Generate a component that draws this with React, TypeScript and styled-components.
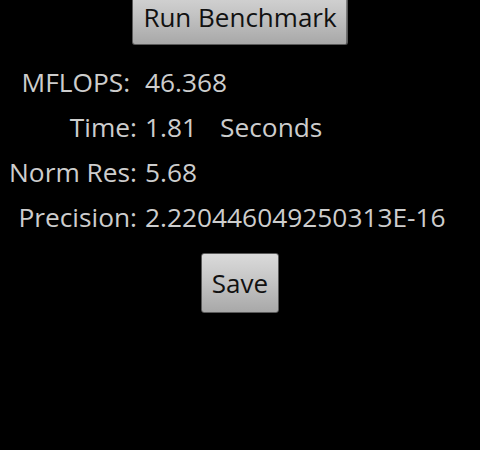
import React from "react";
import styled, { createGlobalStyle } from "styled-components";

const Global = createGlobalStyle`
  html, body {
    margin: 0;
    padding: 0;
    background: #000;
    overflow: hidden;
  }
  body {
    font-family: "Open Sans", "DejaVu Sans", sans-serif;
  }
`;

const Screen = styled.div`
  width: 480px;
  height: 450px;
  background: #000;
  display: flex;
  flex-direction: column;
  align-items: center;
  overflow: hidden;
`;

const Button = styled.button<{ $clipped?: boolean }>`
  height: ${(p) => (p.$clipped ? 45 : 60)}px;
  padding: ${(p) => (p.$clipped ? "4px 10px 0" : "0 10px")};
  border: 1px solid #5a5a5a;
  border-top: ${(p) => (p.$clipped ? "none" : "1px solid #5a5a5a")};
  border-radius: ${(p) => (p.$clipped ? "0 0 3px 3px" : "3px")};
  background: linear-gradient(to bottom, #dcdcdc 0%, #c4c4c4 50%, #a8a8a8 100%);
  background-size: 100% 60px;
  background-position: bottom;
  background-repeat: no-repeat;
  color: #111;
  font-family: "Open Sans", "DejaVu Sans", sans-serif;
  font-size: 26px;
  line-height: 1;
  box-sizing: border-box;
  display: flex;
  align-items: ${(p) => (p.$clipped ? "flex-start" : "center")};
  justify-content: center;
`;

const Table = styled.div`
  align-self: stretch;
  display: grid;
  grid-template-columns: 137px 1fr;
  column-gap: 8px;
  margin-top: 15px;
  margin-bottom: 13px;
`;

const Label = styled.span`
  text-align: right;
  white-space: pre;
  color: #cdcdcd;
  font-size: 26.3px;
  line-height: 45px;
`;

const Value = styled.span`
  white-space: pre;
  color: #cdcdcd;
  font-size: 26.3px;
  line-height: 45px;
  display: flex;
  gap: 23px;
`;

export default function App() {
  return (
    <>
      <Global />
      <Screen>
        <Button $clipped>Run Benchmark</Button>
        <Table>
          <Label>{"MFLOPS: "}</Label>
          <Value>46.368</Value>
          <Label>Time:</Label>
          <Value>
            <span>1.81</span>
            <span>Seconds</span>
          </Value>
          <Label>Norm Res:</Label>
          <Value>5.68</Value>
          <Label>Precision:</Label>
          <Value>2.220446049250313E-16</Value>
        </Table>
        <Button>Save</Button>
      </Screen>
    </>
  );
}
